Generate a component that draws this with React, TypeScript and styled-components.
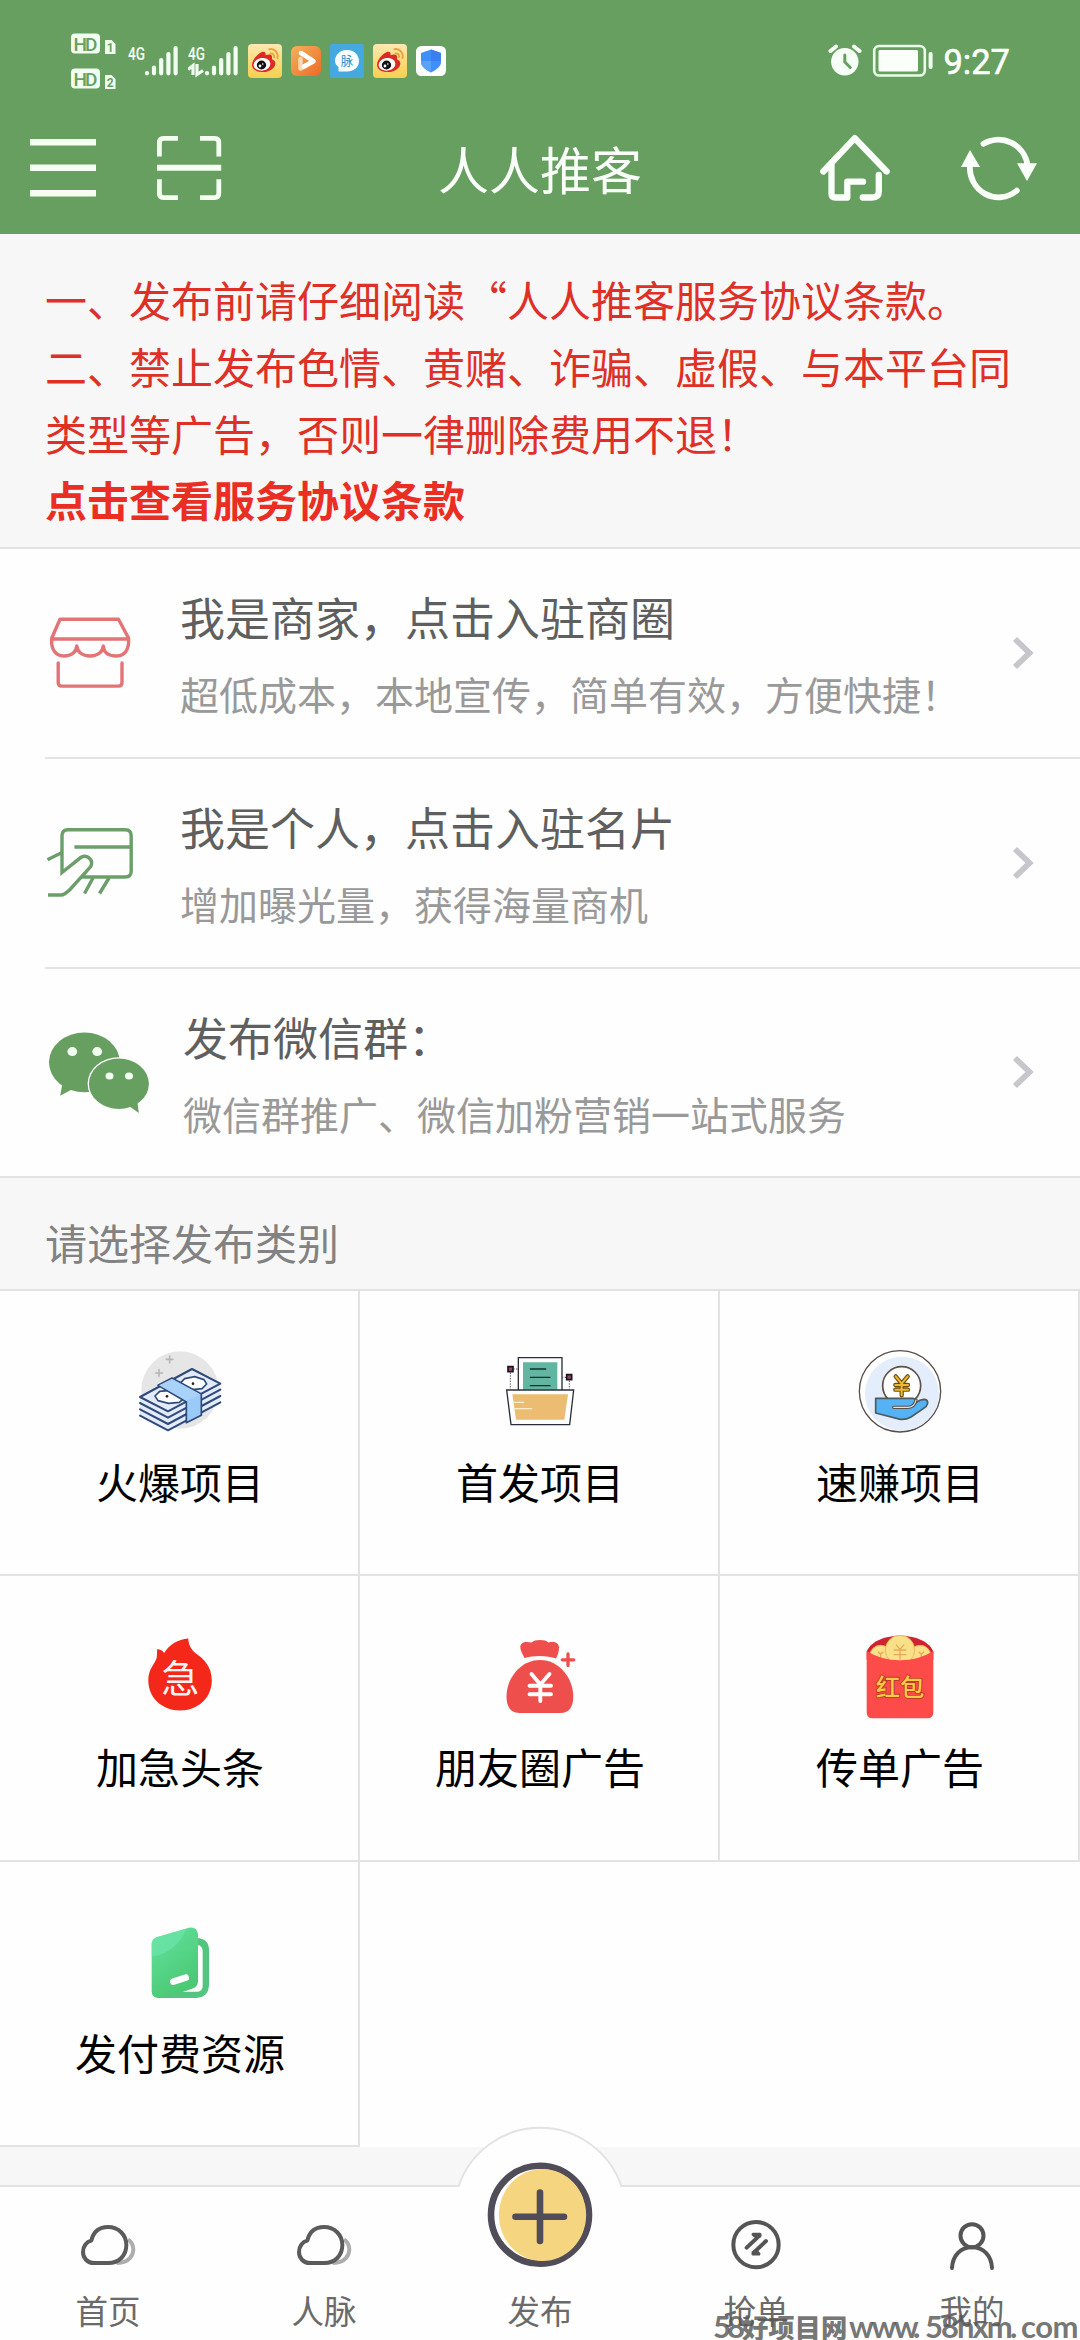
import React from "react";
import styled, { createGlobalStyle } from "styled-components";

const GREEN = "#669f60";
const LINE = "#e3e3e4";
const PAPER = "#fefefe";
const MIST = "#f7f7f7";

const Global = createGlobalStyle`
  * { box-sizing: border-box; }
  body {
    margin: 0;
    background: ${PAPER};
    font-family: "Noto Sans CJK SC", "Noto Sans", sans-serif;
  }
  svg { display: block; flex: none; }
`;

const Screen = styled.div`
  position: relative;
  display: flex;
  flex-direction: column;
  width: 1080px;
  height: 2340px;
  overflow: hidden;
  background: ${MIST};
`;

/* ---------- header ---------- */

const Header = styled.header`
  height: 234px;
  background: ${GREEN};
  color: #fbfffa;
`;

const StatusBar = styled.div`
  display: flex;
  justify-content: space-between;
  align-items: center;
  height: 102px;
  padding: 20px 70px 0 69px;
`;

const StatusGroup = styled.div<{ $gap: number }>`
  display: flex;
  align-items: center;
  gap: ${(p) => p.$gap}px;
`;

const Clock = styled.span`
  padding-top: 2px;
  font: 400 34.5px/36px Roboto, sans-serif;
  -webkit-text-stroke: 0.6px #fbfffa;
`;

const TitleBar = styled.div`
  display: grid;
  grid-template-columns: 1fr auto 1fr;
  align-items: center;
  height: 132px;
`;

const TitleSide = styled.div<{ $end?: boolean }>`
  display: flex;
  align-items: center;
  justify-content: ${(p) => (p.$end ? "flex-end" : "flex-start")};
  gap: ${(p) => (p.$end ? 64 : 58)}px;
  padding: ${(p) => (p.$end ? "0 40px 0 0" : "0 0 0 30px")};
`;

const Title = styled.h1`
  margin: 0;
  font-size: 51px;
  font-weight: 400;
  line-height: 70px;
`;

/* ---------- notice ---------- */

const Notice = styled.section`
  height: 315px;
  padding: 31px 45px 0;
  border-bottom: 2px solid ${LINE};
  color: #df3028;
  font-size: 42px;
  line-height: 67px;
`;

const NoticeText = styled.p`
  margin: 0;
`;

const NoticeLink = styled.a`
  display: block;
  margin-top: -1px;
  font-weight: 700;
  color: #ea2e24;
`;

/* ---------- entry rows ---------- */

const EntryList = styled.section`
  background: ${PAPER};
  padding-left: 45px;
  border-bottom: 2px solid ${LINE};
`;

const Entry = styled.div<{ $last?: boolean }>`
  display: flex;
  align-items: center;
  height: ${(p) => (p.$last ? 207 : 210)}px;
  padding-right: 44px;
  border-bottom: ${(p) => (p.$last ? "none" : `2px solid ${LINE}`)};
`;

const EntryIcon = styled.div<{ $width: number }>`
  width: ${(p) => p.$width}px;
  flex: none;
  margin-top: -1px;
`;

const EntryBody = styled.div`
  flex: 1;
  padding-top: 1px;
`;

const EntryTitle = styled.div`
  font-size: 45px;
  line-height: 68px;
  color: #5f5f5f;
`;

const EntryHint = styled.div`
  margin-top: 11px;
  font-size: 39px;
  line-height: 62px;
  color: #999;
`;

/* ---------- category grid ---------- */

const SectionTitle = styled.h2`
  margin: 0;
  height: 113px;
  padding: 10px 45px 0;
  border-bottom: 2px solid ${LINE};
  font-size: 42px;
  font-weight: 400;
  line-height: 108px;
  color: #828282;
`;

const Grid = styled.section`
  display: grid;
  grid-template-columns: repeat(3, 360px);
  grid-auto-rows: 1fr;
  height: 856px;
  background: ${PAPER};
`;

const Cell = styled.div`
  display: flex;
  flex-direction: column;
  align-items: center;
  padding: 59px 0 0 2px;
  border-right: 2px solid ${LINE};
  border-bottom: 2px solid ${LINE};
`;

const CellLabel = styled.span`
  margin-top: 16px;
  font-size: 42px;
  line-height: 62px;
  color: #000;
`;

/* ---------- bottom tabs ---------- */

const TabBar = styled.nav`
  display: grid;
  grid-template-columns: repeat(5, 1fr);
  height: 155px;
  margin-top: auto;
  border-top: 2px solid ${LINE};
  background: ${PAPER};
`;

const Tab = styled.div`
  position: relative;
  display: flex;
  flex-direction: column;
  align-items: center;
  padding-top: 33px;
`;

const TabIcon = styled.div`
  height: 50px;
`;

const TabLabel = styled.span`
  margin-top: 18px;
  font-size: 32.5px;
  line-height: 44px;
  color: #6a6a6a;
`;

const PublishBump = styled.div`
  position: absolute;
  left: 22px;
  top: -61px;
`;

const Watermark = styled.div`
  position: absolute;
  left: 713px;
  bottom: 0;
  display: flex;
  align-items: baseline;
  white-space: nowrap;
  line-height: 27px;
  color: rgba(88, 88, 88, 0.84);
`;

const MarkPart = styled.span<{ $width: number; $latin?: boolean; $spacing?: number }>`
  flex: none;
  width: ${(p) => p.$width}px;
  font-family: ${(p) => (p.$latin ? "Lato, sans-serif" : '"Noto Sans CJK SC", sans-serif')};
  font-size: ${(p) => (p.$latin ? 31 : 26.3)}px;
  font-weight: ${(p) => (p.$latin ? 700 : 900)};
  letter-spacing: ${(p) => p.$spacing ?? 0}px;
`;

/* ---------- status icons ---------- */

const HdBadges = () => (
  <svg width="50" height="58" viewBox="69 33 50 58">
    {[0, 35].map((dy, i) => (
      <g key={dy} transform={`translate(0 ${dy})`}>
        <rect x="71" y="34.500" width="29" height="20" rx="4" fill="#f1fff0" />
        <text x="85.500" y="51.500" textAnchor="middle" textLength="24" fontFamily="Roboto, sans-serif" fontSize="19" fontWeight="500" fill={GREEN}>HD</text>
        <path d="M105 41h6.500l4 4v10h-10.500z" fill="#f1fff0" />
        <text x="110.300" y="53" textAnchor="middle" fontFamily="Roboto, sans-serif" fontSize="12" fontWeight="700" fill={GREEN}>{i + 1}</text>
      </g>
    ))}
  </svg>
);

const Signal = ({ data }: { data?: boolean }) => (
  <svg width="51" height="34" viewBox="0 0 51 34">
    <text x="0" y="16" textLength="17" lengthAdjust="spacingAndGlyphs" fontFamily="Roboto, sans-serif" fontSize="18.500" fontWeight="500" fill="#f1fff0">4G</text>
    <g stroke="#f1fff0" strokeWidth="4.200" strokeLinecap="round">
      <path d="M19 29v.300M26 23.500v5.800M33.200 16v13.300M40.400 10v19.300M47.600 4v25.300" />
    </g>
    {data && <path d="M0 25.500l5-4v9.500M9 20v10.500l6-4" fill="none" stroke="#f1fff0" strokeWidth="3.200" />}
  </svg>
);

const WeiboApp = () => (
  <svg width="34" height="34" viewBox="0 0 34 34">
    <defs>
      <linearGradient id="weibo" x1="0" y1="0" x2="0" y2="1">
        <stop offset="0" stopColor="#fbe9b0" />
        <stop offset="1" stopColor="#f8cf4e" />
      </linearGradient>
    </defs>
    <rect width="34" height="34" rx="4" fill="url(#weibo)" />
    <path d="M4 20.500C4.500 15 10 9.500 14 8c3-.800 4 .800 3.500 3.200 3-1.200 7-1.200 6.500 2 .200 1.500-.500 2 .800 2.600 3.500 1.600 3 5.200 1 7.600C23 27 17.500 28.400 13 28 8 27.600 4 25 4 20.500z" fill="#dd2a22" />
    <ellipse cx="14" cy="20.300" rx="8.400" ry="6.300" fill="#fff" transform="rotate(-8 14 20.300)" />
    <ellipse cx="13.500" cy="21" rx="4.700" ry="4.400" fill="#111" />
    <circle cx="12" cy="22" r="1.400" fill="#fff" />
    <circle cx="14.800" cy="20" r=".8" fill="#fff" />
    <path d="M21.500 5.200c5-1 9.200 3.500 8 9M22.500 9.500c2.500-.400 4 1.400 3.600 3.600" fill="none" stroke="#eda23c" strokeWidth="1.900" strokeLinecap="round" />
  </svg>
);

const PlayApp = () => (
  <svg width="30" height="30" viewBox="0 0 30 30">
    <defs>
      <linearGradient id="play" x1="0" y1="0" x2="1" y2="1">
        <stop offset="0" stopColor="#f3b25c" />
        <stop offset="1" stopColor="#ee6a26" />
      </linearGradient>
    </defs>
    <rect width="30" height="30" rx="6" fill="url(#play)" />
    <path d="M9.500 13v9.500L22 15.300" fill="none" stroke="#fbd9b8" strokeWidth="4.500" strokeLinecap="round" strokeLinejoin="round" />
    <path d="M10 7l12.500 8.200L13 20.500" fill="none" stroke="#fff" strokeWidth="4.500" strokeLinecap="round" strokeLinejoin="round" />
  </svg>
);

const MaiApp = () => (
  <svg width="34" height="34" viewBox="0 0 34 34">
    <rect width="34" height="34" rx="2" fill="#45a9e0" />
    <path d="M17 6c7 0 12 4.800 12 11s-5 10.500-12 10.500H8.500V23C6.500 21.500 5 19.500 5 17 5 10.800 10 6 17 6z" fill="#fbfeff" />
    <text x="17" y="21.500" textAnchor="middle" fontFamily="Noto Sans CJK SC, sans-serif" fontSize="12.500" fill="#2d8fd0">脉</text>
  </svg>
);

const ShieldApp = () => (
  <svg width="30" height="30" viewBox="0 0 30 30">
    <rect width="30" height="30" rx="5.500" fill="#fff" />
    <path d="M15 3.500L25 7v9c0 4.500-5 8-10 10.500C10 24 5 20.500 5 16V7z" fill="#3f8ff8" />
    <path d="M15 3.500L25 7v8H15z" fill="#3a7ff0" />
    <path d="M5 15h10v11.500C10 24 5 20.500 5 16z" fill="#5aa2fb" />
  </svg>
);

const Alarm = () => (
  <svg width="34" height="34" viewBox="828 45 34 34">
    <circle cx="844.800" cy="62.700" r="13.700" fill="#f6fff5" />
    <path d="M830.500 52l5.500-4.500M859.500 52l-5.500-4.500" stroke="#f6fff5" strokeWidth="4" strokeLinecap="round" />
    <path d="M844.800 56v7l5.500 5.500" fill="none" stroke={GREEN} strokeWidth="3" strokeLinecap="round" />
  </svg>
);

const Battery = () => (
  <svg width="61" height="34" viewBox="873 45 61 34">
    <rect x="875.200" y="47" width="50.600" height="29.500" rx="5" fill="none" stroke="#e9ffe6" strokeWidth="2.600" />
    <rect x="879.500" y="51" width="39.500" height="21.500" rx="1.500" fill="#fbfffa" />
    <rect x="929.600" y="53" width="4" height="17" rx="2" fill="#f1fff0" />
  </svg>
);

/* ---------- title bar icons ---------- */

const MenuIcon = () => (
  <svg width="66" height="66" viewBox="30 135 66 66" fill="#f4fff2">
    <path d="M30 139h66v6.500H30zM30 164.500h66v6.500H30zM30 190h66v6.500H30z" />
  </svg>
);

const ScanIcon = () => (
  <svg width="70" height="66" viewBox="154 135 70 66" fill="none" stroke="#f4fff2" strokeWidth="4.800">
    <path d="M178 138.400h-14.500q-4.100 0-4.100 4.100V156.500M200 138.400h14.700q4.100 0 4.100 4.100V156.500M178 197.600h-14.500q-4.100 0-4.100-4.100V179.200M200 197.600h14.700q4.100 0 4.100-4.100V179.200" />
    <path d="M157 167.700h64.200" strokeWidth="6" />
  </svg>
);

const HomeIcon = () => (
  <svg width="78" height="70" viewBox="816 133 78 70" fill="none" stroke="#fbfffa" strokeWidth="6.300" strokeLinecap="round" strokeLinejoin="round">
    <path d="M823.300 171.500L854.800 138.200L886.700 171.500" />
    <path d="M831.500 164V193.500q0 4 4 4H847.300V181.700H863" />
    <path d="M862.800 197.500H872q6.800 0 6.800-6V175" />
  </svg>
);

const RefreshIcon = () => (
  <svg width="82" height="70" viewBox="958 133 82 70">
    <g fill="none" stroke="#fbfffa" strokeWidth="5.800" strokeLinecap="round">
      <path d="M983.500 143.700A29.500 29.500 0 0 1 1027.500 165" />
      <path d="M1016.800 190.600A28.700 29.500 0 0 1 970 165" />
    </g>
    <path d="M1017 163.300h20l-10 17.700zM970 150l10 17h-19z" fill="#fbfffa" />
  </svg>
);

/* ---------- entry icons ---------- */

const StoreIcon = () => (
  <svg width="90" height="90" viewBox="45 607 90 90" fill="none" stroke="#e27476" strokeWidth="3.400" strokeLinecap="round" strokeLinejoin="round">
    <path d="M60 618.300h58.500L128.500 637c.800 8-1.500 18-12 18-8.500 0-12.800-4-13.200-10-.600 6-5.500 10-13.300 10s-12.600-4-13.200-10c-.600 6-5 10-12.800 10-10.500 0-13.300-10-12.200-18zM52 638h76.500" />
    <path d="M58.200 662v19.500q0 3.600 3.600 3.600h56.600q3.600 0 3.600-3.600V662" />
  </svg>
);

const CardIcon = () => (
  <svg width="90" height="90" viewBox="45 817 90 90" fill="none" stroke="#6b9e69" strokeWidth="3.400">
    <path d="M81 876h44.200q6 0 6-6v-35.300q0-6-6-6H68q-6 0-6 6v36.800l19-15.200c7-3.500 13 3.500 9.500 9.500L70 888.500q-5.500 5.500-9 5.500H48" />
    <path d="M74.400 846H130M47.500 858.800l14.500-7.300M93 877l-8.500 15.500M109 877l-9.500 15.500" />
  </svg>
);

const WechatIcon = () => (
  <svg width="110" height="90" viewBox="45 1026 110 90">
    <path d="M62.500 1082l-2.300 12.800 13-7z" fill={GREEN} />
    <ellipse cx="84.400" cy="1061.300" rx="35.400" ry="29.900" fill={GREEN} />
    <ellipse cx="72.300" cy="1050.600" rx="4.900" ry="4.500" fill="#f3fff0" />
    <ellipse cx="97.200" cy="1050.600" rx="4.900" ry="4.500" fill="#f3fff0" />
    <ellipse cx="118.900" cy="1082.800" rx="31.300" ry="26.600" fill="#fff" />
    <path d="M129 1105l9.800 7-1.600-13z" fill={GREEN} />
    <ellipse cx="118.900" cy="1082.800" rx="30" ry="25.200" fill={GREEN} />
    <ellipse cx="109.500" cy="1075" rx="4" ry="3.600" fill="#f3fff0" />
    <ellipse cx="129" cy="1075" rx="4" ry="3.600" fill="#f3fff0" />
  </svg>
);

const ChevronSvg = styled.svg`
  margin-top: -1px;
`;

const Chevron = () => (
  <ChevronSvg width="24" height="34" viewBox="0 0 24 34" fill="none" stroke="#c6c6cb" strokeWidth="5.800">
    <path d="M3 3l14.500 14L3 31" />
  </ChevronSvg>
);

/* ---------- category icons ---------- */

const MoneyStack = () => (
  <svg width="84" height="84" viewBox="414 570 252 252" strokeLinejoin="round" strokeLinecap="round">
    <circle cx="540" cy="690" r="116" fill="#e6e6e7" />
    <path d="M509 588v20M499 598h20M477 629v20M467 639h20" stroke="#b5b5ba" strokeWidth="5" />
    <path d="M420 711L576 627l85 44v62L504 811l-84-44z" fill="#e3ebfb" />
    <g fill="none" stroke="#2f4a78" strokeWidth="6">
      <path d="M420 711L576 627l85 44L504 754z" />
      <path d="M420 729l84 44 157-84M420 748l84 44 157-84M420 767l84 44 157-84" />
      <path d="M465 708l14-14 34-3 33 9 8 13-16 14-32 3-32-8zM540 670l14-14 30-6 28 9 8 13-14 14-28 3-28-8z" fill="#fff" strokeWidth="5" />
      <path d="M474 676l42-22 88 48v64l-45 22v-62z" fill="#9bcaf8" strokeWidth="5" />
    </g>
    <path d="M477 676l39-19 85 46-40 20z" fill="#a9d2fb" />
    <circle cx="501" cy="709" r="4" fill="#222" />
    <circle cx="579" cy="671" r="4" fill="#222" />
  </svg>
);

const FolderDoc = () => (
  <svg width="84" height="84" viewBox="414 210 252 252" fill="none">
    <path d="M475 330V233h131v97" fill="#fff" stroke="#2b2f3a" strokeWidth="4" />
    <path d="M489 247h103v82H489z" fill="#62b5a0" />
    <path d="M511 267h46M511 292h59M511 317h59" stroke="#12302c" strokeWidth="4" strokeLinecap="round" />
    <path d="M451 278v50M460 267h14M628 302v26M606 292h14" stroke="#55505c" strokeWidth="3" strokeDasharray="4 4" />
    <path d="M444 260h15v15h-15zM620 284h15v15h-15z" fill="#8b4a66" stroke="#1f1320" strokeWidth="5" />
    <path d="M440 330h201l-12 104H453z" fill="#fff" stroke="#2b2f3a" strokeWidth="4" />
    <path d="M457 343h167l-11 76H468z" fill="#ecbc72" />
    <path d="M459 367h32M461 386h54" stroke="#fdeecb" strokeWidth="4" strokeLinecap="round" />
  </svg>
);

const HandCoin = () => (
  <svg width="84" height="84" viewBox="414 210 252 252" strokeLinejoin="round" strokeLinecap="round">
    <circle cx="540" cy="334" r="122" fill="#fff" stroke="#5a4d4a" strokeWidth="4" />
    <circle cx="546" cy="341" r="111" fill="#e3edfb" />
    <circle cx="545" cy="317" r="57" fill="#fff" stroke="#5b5146" strokeWidth="5" />
    <g fill="none">
      <path d="M527 289l18 22 18-22M545 311v35M526 315h38M526 329h38" stroke="#6b5014" strokeWidth="13" />
      <path d="M527 289l18 22 18-22M545 311v35M526 315h38M526 329h38" stroke="#edb92e" strokeWidth="6" />
    </g>
    <path d="M467 355h113q6 3 10 12 8-8 22-9 12 0 11 12-2 9-12 15l-38 26q-16 9-32 7l-74-19z" fill="#55b2f5" stroke="#4f5a5e" strokeWidth="5" />
    <path d="M521 382h43q20-1 24-22" fill="none" stroke="#5b5146" strokeWidth="10" />
    <path d="M521 382h43q20-1 24-22" fill="none" stroke="#cfe8fb" strokeWidth="3.500" />
  </svg>
);

const UrgentFlame = () => (
  <svg width="84" height="84" viewBox="138 1635.500 84 84">
    <path d="M188.300 1639c.200 6 2.500 10.500 7 14.500 8 5.500 16.500 13 16.500 27.500 0 17.500-14 30-31.700 30s-31.800-12.500-31.800-30c0-12 6.500-16 8.300-22.500.700-3 .200-6 .700-9 2.800.300 5.500 1.500 6.800 4 6-9 13.500-13.500 24.200-14.500z" fill="#f3281b" />
    <text x="180.300" y="1692.500" textAnchor="middle" fontFamily="Noto Sans CJK SC, sans-serif" fontSize="38" fill="#fff4f2">急</text>
  </svg>
);

const MoneyBag = () => (
  <svg width="84" height="84" viewBox="498 1635.500 84 84" fill="#ee4e4c">
    <path d="M524.500 1658.500c-2-4-4.500-8-4.200-11.500.700-4.500 5.200-5.200 11.200-4 3-3.300 14-3.300 17 0 6-1.200 10 0 10.500 4.500.300 3.500-1.200 8-3 11.500-8-3.300-23-3.500-31.500-.5z" />
    <path d="M540 1660.500c20 0 33.300 19 33.300 36.500 0 10-4 16.500-12.800 16.500h-41c-9 0-13-6.500-13-16.500 0-17.500 13.500-36.500 33.500-36.500z" />
    <g fill="none" strokeLinecap="round">
      <path d="M531.500 1674.500L540.300 1685L549.500 1674.500M540.300 1685v16.500M529.500 1686.300h21.500M529.500 1694.800h21.500" stroke="#fff" strokeWidth="3.900" />
      <path d="M568 1654.500v11.500M562.300 1660.300h11.500" stroke="#ee4e4c" strokeWidth="3.300" />
    </g>
  </svg>
);

const RedPacket = () => (
  <svg width="84" height="84" viewBox="414 166 252 252">
    <path d="M440 240v-24c10-28 50-48 100-48s90 20 100 48v24z" fill="#cf2430" />
    <g fill="#fbe08a" stroke="#efb560" strokeWidth="3">
      <circle cx="482" cy="230" r="33" />
      <circle cx="600" cy="230" r="33" />
      <circle cx="540" cy="211" r="44" />
    </g>
    <path d="M528 195l12 14 12-14M540 209v30M521 211h38M521 225h38M474 216l8 8 8-8M482 224v12M596 216l8 8 8-8M604 224v12" fill="none" stroke="#e3ab55" strokeWidth="4" />
    <path d="M440 214q44 28 100 28t100-28v184q0 18-18 18H458q-18 0-18-18z" fill="#fd4b4a" />
    <text x="540" y="349" textAnchor="middle" fontFamily="Noto Sans CJK SC, sans-serif" fontSize="73" fontWeight="500" fill="#fbc945" stroke="#b5351d" strokeWidth="5" paintOrder="stroke">红包</text>
  </svg>
);

const GreenBook = () => (
  <svg width="84" height="84" viewBox="414 123 252 252">
    <defs>
      <linearGradient id="book" x1="0" y1="0" x2=".5" y2="1">
        <stop offset="0" stopColor="#63e3a0" />
        <stop offset="1" stopColor="#4bc873" />
      </linearGradient>
    </defs>
    <path d="M590 174q38 2 37 38v104q-2 36-38 38H476q-20-1-21-20l85 2 55-16z" fill="#52c67e" />
    <path d="M593 194q15 4 15 20v104q0 16-16 17h-48q34-7 49-20z" fill="#fff" />
    <path d="M455 190q1-12 14-18l98-29q25-3 27 20v142q-1 14-15 20-58 22-103 28-20-1-21-20z" fill="url(#book)" />
    <path d="M455 190q1-12 14-18l90-26q-30 72-104 84z" fill="#6fe6ae" opacity=".6" />
    <path d="M520 305l37-12" stroke="#fff" strokeWidth="20" strokeLinecap="round" />
  </svg>
);

/* ---------- tab icons ---------- */

const CloudIcon = () => (
  <svg width="60" height="50" viewBox="234 1020 180 150" fill="none" strokeWidth="12" strokeLinejoin="round">
    <path d="M384 1078c20 14 20 40 6 56-10 12-22 15-40 15" stroke="#adadad" />
    <path d="M274 1082c6-26 24-41 50-41 32 0 55 24 55 54 0 32-22 54-54 54h-43c-20 0-33-15-33-33 0-18 11-31 25-34z" stroke="#5b5b5b" />
  </svg>
);

const SwapIcon = () => (
  <svg width="60" height="50" viewBox="78 60 180 150" fill="none" stroke="#555" strokeLinecap="round" strokeLinejoin="round">
    <circle cx="168" cy="134" r="68" strokeWidth="12" />
    <path d="M140 143l36-34M198 123l-36 34" strokeWidth="12" />
    <path d="M159 103h21v5h-16zM177 162h-18v-5h14z" strokeWidth="9" />
  </svg>
);

const PersonIcon = () => (
  <svg width="60" height="50" viewBox="726 60 180 150" fill="none" stroke="#555" strokeWidth="12" strokeLinecap="round">
    <circle cx="816" cy="107" r="34.500" />
    <path d="M756 204c2-38 26-62 60-62s58 24 60 62" />
  </svg>
);

const PublishIcon = () => (
  <svg width="172" height="150" viewBox="454 2126 172 150">
    <path d="M458.300 2190V2186A86 86 0 0 1 621.700 2186V2190z" fill={PAPER} />
    <path d="M458.300 2187A86 86 0 0 1 621.700 2187" fill="none" stroke={LINE} strokeWidth="2" />
    <circle cx="540" cy="2214.700" r="49" fill="#fff" stroke="#504d58" strokeWidth="6.600" />
    <ellipse cx="542.500" cy="2215" rx="43.700" ry="46" fill="#f5d57f" />
    <path d="M540 2192.500v48.500M515.500 2216.800h48.500" stroke="#504d58" strokeWidth="6.600" strokeLinecap="round" />
  </svg>
);

/* ---------- data ---------- */

const entries = [
  { Icon: StoreIcon, width: 135, title: "我是商家，点击入驻商圈", hint: "超低成本，本地宣传，简单有效，方便快捷！" },
  { Icon: CardIcon, width: 135, title: "我是个人，点击入驻名片", hint: "增加曝光量，获得海量商机" },
  { Icon: WechatIcon, width: 138, title: "发布微信群：", hint: "微信群推广、微信加粉营销一站式服务" },
];

const categories = [
  { Icon: MoneyStack, label: "火爆项目" },
  { Icon: FolderDoc, label: "首发项目" },
  { Icon: HandCoin, label: "速赚项目" },
  { Icon: UrgentFlame, label: "加急头条" },
  { Icon: MoneyBag, label: "朋友圈广告" },
  { Icon: RedPacket, label: "传单广告" },
  { Icon: GreenBook, label: "发付费资源" },
];

const tabs = [
  { Icon: CloudIcon, label: "首页" },
  { Icon: CloudIcon, label: "人脉" },
  { label: "发布" },
  { Icon: SwapIcon, label: "抢单" },
  { Icon: PersonIcon, label: "我的" },
];

export default function App() {
  return (
    <Screen lang="zh-CN">
      <Global />
      <Header>
        <StatusBar>
          <StatusGroup $gap={9}>
            <HdBadges />
            <Signal />
            <Signal data />
            <StatusGroup $gap={9}>
              <WeiboApp />
              <PlayApp />
              <MaiApp />
              <WeiboApp />
              <ShieldApp />
            </StatusGroup>
          </StatusGroup>
          <StatusGroup $gap={10}>
            <Alarm />
            <Battery />
            <Clock>9:27</Clock>
          </StatusGroup>
        </StatusBar>
        <TitleBar>
          <TitleSide>
            <MenuIcon />
            <ScanIcon />
          </TitleSide>
          <Title>人人推客</Title>
          <TitleSide $end>
            <HomeIcon />
            <RefreshIcon />
          </TitleSide>
        </TitleBar>
      </Header>

      <Notice>
        <NoticeText>一、发布前请仔细阅读“人人推客服务协议条款。</NoticeText>
        <NoticeText>二、禁止发布色情、黄赌、诈骗、虚假、与本平台同类型等广告，否则一律删除费用不退！</NoticeText>
        <NoticeLink>点击查看服务协议条款</NoticeLink>
      </Notice>

      <EntryList>
        {entries.map(({ Icon, width, title, hint }, i) => (
          <Entry key={title} $last={i === entries.length - 1}>
            <EntryIcon $width={width}>
              <Icon />
            </EntryIcon>
            <EntryBody>
              <EntryTitle>{title}</EntryTitle>
              <EntryHint>{hint}</EntryHint>
            </EntryBody>
            <Chevron />
          </Entry>
        ))}
      </EntryList>

      <SectionTitle>请选择发布类别</SectionTitle>
      <Grid>
        {categories.map(({ Icon, label }) => (
          <Cell key={label}>
            <Icon />
            <CellLabel>{label}</CellLabel>
          </Cell>
        ))}
      </Grid>

      <TabBar>
        {tabs.map(({ Icon, label }) => (
          <Tab key={label}>
            <TabIcon>
              {Icon ? (
                <Icon />
              ) : (
                <PublishBump>
                  <PublishIcon />
                </PublishBump>
              )}
            </TabIcon>
            <TabLabel>{label}</TabLabel>
          </Tab>
        ))}
      </TabBar>

      <Watermark>
        <MarkPart $latin $width={29} $spacing={-4}>58</MarkPart>
        <MarkPart $width={107}>好项目网</MarkPart>
        <MarkPart $latin $width={64} $spacing={-2.5}>www</MarkPart>
        <MarkPart $latin $width={12}>.</MarkPart>
        <MarkPart $latin $width={85} $spacing={-2}>58hxm</MarkPart>
        <MarkPart $latin $width={11}>.</MarkPart>
        <MarkPart $latin $width={58} $spacing={-0.5}>com</MarkPart>
      </Watermark>
    </Screen>
  );
}
